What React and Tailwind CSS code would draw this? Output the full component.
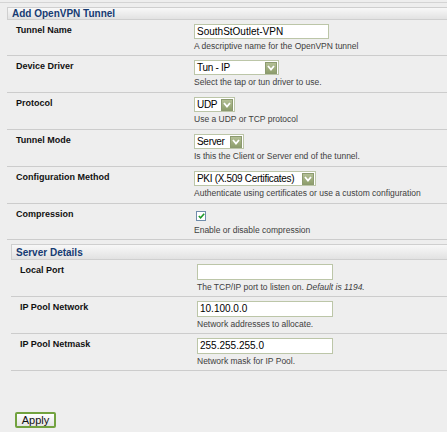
import React from 'react';

const Arrow = () => (
  <span className="ml-auto mr-[1px] flex h-[12px] w-[12px] shrink-0 items-center justify-center border border-[#8c9a70] bg-gradient-to-b from-[#b3bf95] to-[#8e9e6c]">
    <svg width="8" height="6" viewBox="0 0 8 6">
      <polyline points="1,1 4,4.5 7,1" fill="none" stroke="#ffffff" strokeWidth="1.8" />
    </svg>
  </span>
);

const Select = ({ value, width }) => (
  <div className={`flex h-[15px] items-center border border-[#bcc6a8] bg-white pl-[2px] text-[10px] leading-none text-black ${width}`}>
    <span className="whitespace-nowrap tracking-[-0.3px]">{value}</span>
    <Arrow />
  </div>
);

const TextInput = ({ value, width, height }) => (
  <div className={`flex items-center border border-[#bcc6a8] bg-white pl-[2px] text-[10px] leading-none text-black ${width} ${height}`}>
    {value}
  </div>
);

const Row = ({ label, labelWidth, children, desc, pb }) => (
  <div className={`flex border-b border-[#cccccc] pt-[4px] ${pb}`}>
    <div className={`${labelWidth} shrink-0 pl-[9px] text-[9px] font-bold leading-[13px] text-[#111111]`}>
      {label}
    </div>
    <div className="flex flex-col">
      {children}
      <div className="mt-[2px] whitespace-nowrap text-[8.5px] leading-[10px] text-[#404040]">{desc}</div>
    </div>
  </div>
);

const Header = ({ title, height }) => (
  <div className={`flex items-center border border-r-0 border-[#cfcfcf] bg-gradient-to-b from-[#f8f8f8] to-[#e2e2e2] pl-[4px] text-[10px] font-bold text-[#163b73] ${height}`}>
    {title}
  </div>
);

export default function App() {
  return (
    <div className="h-[432px] w-[447px] overflow-hidden bg-[#eeeeee] pt-[2px]" style={{ fontFamily: '"Liberation Sans", Arial, sans-serif' }}>
      <div className="border-t border-[#d4d4d4]" />

      <div className="ml-[7px] mt-[4px]">
        <Header title="Add OpenVPN Tunnel" height="h-[13px]" />

        <Row label="Tunnel Name" labelWidth="w-[187px]" pb="pb-[4px]" desc="A descriptive name for the OpenVPN tunnel">
          <TextInput value="SouthStOutlet-VPN" width="w-[135px]" height="h-[15px]" />
        </Row>
        <Row label="Device Driver" labelWidth="w-[187px]" pb="pb-[5px]" desc="Select the tap or tun driver to use.">
          <Select value="Tun - IP" width="w-[85px]" />
        </Row>
        <Row label="Protocol" labelWidth="w-[187px]" pb="pb-[5px]" desc="Use a UDP or TCP protocol">
          <Select value="UDP" width="w-[41px]" />
        </Row>
        <Row label="Tunnel Mode" labelWidth="w-[187px]" pb="pb-[5px]" desc="Is this the Client or Server end of the tunnel.">
          <Select value="Server" width="w-[50px]" />
        </Row>
        <Row label="Configuration Method" labelWidth="w-[187px]" pb="pb-[5px]" desc="Authenticate using certificates or use a custom configuration">
          <Select value="PKI (X.509 Certificates)" width="w-[122px]" />
        </Row>
        <Row label="Compression" labelWidth="w-[187px]" pb="pb-[4px]" desc="Enable or disable compression">
          <div className="flex h-[15px] items-center pl-[2px]">
            <span className="flex h-[10px] w-[10px] items-center justify-center border border-[#6f8cab] bg-white">
              <svg width="7" height="6" viewBox="0 0 7 6">
                <polyline points="0.8,3 2.6,4.8 6.2,0.8" fill="none" stroke="#1f9a2a" strokeWidth="1.6" />
              </svg>
            </span>
          </div>
        </Row>
      </div>

      <div className="ml-[11px] mt-[4px]">
        <Header title="Server Details" height="h-[16px]" />

        <Row label="Local Port" labelWidth="w-[186px]" pb="pb-[4px]" desc={<>The TCP/IP port to listen on. <i>Default is 1194.</i></>}>
          <TextInput value="" width="w-[136px]" height="h-[16px]" />
        </Row>
        <Row label="IP Pool Network" labelWidth="w-[186px]" pb="pb-[4px]" desc="Network addresses to allocate.">
          <TextInput value="10.100.0.0" width="w-[136px]" height="h-[16px]" />
        </Row>
        <Row label="IP Pool Netmask" labelWidth="w-[186px]" pb="pb-[4px]" desc="Network mask for IP Pool.">
          <TextInput value="255.255.255.0" width="w-[136px]" height="h-[16px]" />
        </Row>
      </div>

      <div className="ml-[15px] mt-[41px]">
        <button className="flex h-[16px] w-[41px] items-center justify-center rounded-[2px] border-2 border-[#72a23f] bg-gradient-to-b from-[#ffffff] to-[#e4e4e4] text-[11px] leading-none text-[#111111]">
          Apply
        </button>
      </div>
    </div>
  );
}
